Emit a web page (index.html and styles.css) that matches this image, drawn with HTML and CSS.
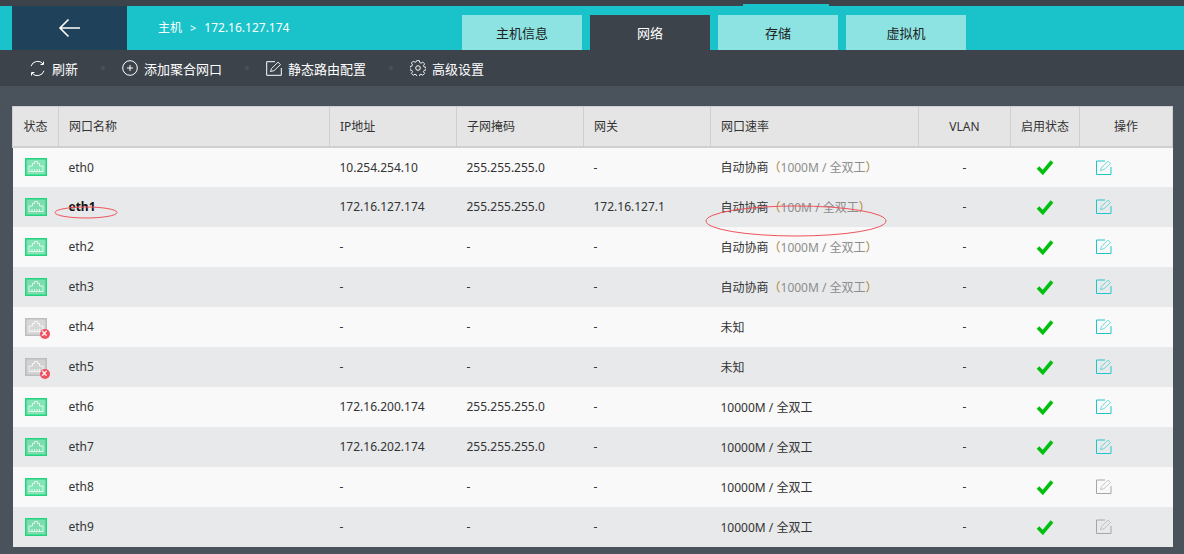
FILE: index.html
```html
<!DOCTYPE html>
<html lang="zh">
<head>
<meta charset="utf-8">
<title>网络</title>
<link rel="stylesheet" href="styles.css">
</head>
<body>
<svg class="defs" width="0" height="0">
  <defs>
    <symbol id="port" viewBox="0 0 22 18">
      <rect x="0.75" y="0.75" width="20.5" height="16.5" fill="currentColor" fill-opacity=".55" stroke="currentColor" stroke-width="1.5"/>
      <path d="M4 13.5V8h3.5V5.5h2V3.5h3v2h2V8H18v5.5z" fill="none" stroke="#fff" stroke-opacity=".75" stroke-width="1"/>
      <path d="M7 11v2M9.5 11v2M12 11v2M14.5 11v2" stroke="#fff" stroke-opacity=".75" stroke-width="1"/>
    </symbol>
    <symbol id="edit" viewBox="0 0 16 15">
      <path d="M9 1H.5v13.5H15V7" fill="none" stroke="currentColor"/>
      <path d="M4.5 10.5l1-3L12 1.2l2.5 2.4L8 9.7z" fill="none" stroke="currentColor" stroke-opacity=".6"/>
    </symbol>
    <symbol id="check" viewBox="0 0 18 16">
      <path d="M2 8.5l4.8 5L16 2.5" fill="none" stroke="currentColor" stroke-width="3.6"/>
    </symbol>
  </defs>
</svg>

<header class="topbar">
  <div class="top-mark"></div>
  <div class="titlebar">
    <a class="back">
      <svg width="24" height="20" viewBox="0 0 24 20"><path d="M22 10H2M10.500 1.500L2 10l8.500 8.500" fill="none" stroke="#fff" stroke-width="1.600"/></svg>
    </a>
    <div class="crumb"><span>主机</span><span class="sep">&gt;</span><span>172.16.127.174</span></div>
    <nav class="tabs">
      <a class="tab">主机信息</a>
      <a class="tab active">网络</a>
      <a class="tab">存储</a>
      <a class="tab">虚拟机</a>
    </nav>
  </div>
  <div class="toolbar">
    <a class="tool">
      <svg width="17" height="17" viewBox="0 0 17 17"><path d="M2 6.200A7 7 0 0 1 14 3.800M15 10.800A7 7 0 0 1 3 13.200" fill="none" stroke="#fff" stroke-width="1"/><path d="M14.500 1.500v3h-3M2.500 15.500v-3h3" fill="none" stroke="#fff" stroke-width="1"/></svg>
      刷新
    </a>
    <i class="dot"></i>
    <a class="tool">
      <svg width="16" height="16" viewBox="0 0 16 16"><circle cx="8" cy="8" r="7.300" fill="none" stroke="#fff"/><path d="M8 5v6M5 8h6" stroke="#fff"/></svg>
      添加聚合网口
    </a>
    <i class="dot"></i>
    <a class="tool">
      <svg width="16" height="15" viewBox="0 0 16 15"><path d="M9 .7H.7v13.600H15.300V7" fill="none" stroke="#fff"/><path d="M4.500 10.500l1-3L12 1.200l2.500 2.400L8 9.700z" fill="none" stroke="#fff" stroke-width=".9"/></svg>
      静态路由配置
    </a>
    <i class="dot"></i>
    <a class="tool">
      <svg width="16" height="16" viewBox="0 0 16 16"><path d="M6.700.8h2.600l.4 2 1.300.6 1.800-1.100 1.800 1.800-1.100 1.800.6 1.300 2 .4v2.600l-2 .4-.6 1.300 1.100 1.800-1.800 1.800-1.800-1.100-1.300.6-.4 2H6.700l-.4-2-1.300-.6-1.800 1.100-1.800-1.800 1.100-1.800-.6-1.300-2-.4V6.700l2-.4.6-1.300-1.100-1.800 1.800-1.800L5 2.500l1.300-.6z" fill="none" stroke="#fff" stroke-width=".9" transform="translate(0 -.2)"/><circle cx="8" cy="8" r="2.300" fill="none" stroke="#fff"/></svg>
      高级设置
    </a>
  </div>
</header>

<main class="content">
  <table class="ports">
    <colgroup>
      <col class="c-state"><col class="c-name"><col class="c-ip"><col class="c-mask"><col class="c-gw"><col class="c-speed"><col class="c-vlan"><col class="c-on"><col class="c-op">
    </colgroup>
    <thead>
      <tr><th class="mid">状态</th><th>网口名称</th><th>IP地址</th><th>子网掩码</th><th>网关</th><th>网口速率</th><th class="mid">VLAN</th><th class="mid">启用状态</th><th class="mid">操作</th></tr>
    </thead>
    <tbody>
      <tr>
        <td class="state"><svg class="port up"><use href="#port"/></svg></td><td>eth0</td><td>10.254.254.10</td><td>255.255.255.0</td><td>-</td>
        <td>自动协商<span class="neg"><b>（</b>1000M / 全双工<b>）</b></span></td><td class="mid">-</td>
        <td class="mid"><svg class="check"><use href="#check"/></svg></td><td class="op"><svg class="edit"><use href="#edit"/></svg></td>
      </tr>
      <tr>
        <td class="state"><svg class="port up"><use href="#port"/></svg></td><td class="bold">eth1</td><td>172.16.127.174</td><td>255.255.255.0</td><td>172.16.127.1</td>
        <td>自动协商<span class="neg"><b>（</b>100M / 全双工<b>）</b></span></td><td class="mid">-</td>
        <td class="mid"><svg class="check"><use href="#check"/></svg></td><td class="op"><svg class="edit"><use href="#edit"/></svg></td>
      </tr>
      <tr>
        <td class="state"><svg class="port up"><use href="#port"/></svg></td><td>eth2</td><td>-</td><td>-</td><td>-</td>
        <td>自动协商<span class="neg"><b>（</b>1000M / 全双工<b>）</b></span></td><td class="mid">-</td>
        <td class="mid"><svg class="check"><use href="#check"/></svg></td><td class="op"><svg class="edit"><use href="#edit"/></svg></td>
      </tr>
      <tr>
        <td class="state"><svg class="port up"><use href="#port"/></svg></td><td>eth3</td><td>-</td><td>-</td><td>-</td>
        <td>自动协商<span class="neg"><b>（</b>1000M / 全双工<b>）</b></span></td><td class="mid">-</td>
        <td class="mid"><svg class="check"><use href="#check"/></svg></td><td class="op"><svg class="edit"><use href="#edit"/></svg></td>
      </tr>
      <tr>
        <td class="state"><span class="down-wrap"><svg class="port down"><use href="#port"/></svg><i class="x">×</i></span></td><td>eth4</td><td>-</td><td>-</td><td>-</td>
        <td>未知</td><td class="mid">-</td>
        <td class="mid"><svg class="check"><use href="#check"/></svg></td><td class="op"><svg class="edit"><use href="#edit"/></svg></td>
      </tr>
      <tr>
        <td class="state"><span class="down-wrap"><svg class="port down"><use href="#port"/></svg><i class="x">×</i></span></td><td>eth5</td><td>-</td><td>-</td><td>-</td>
        <td>未知</td><td class="mid">-</td>
        <td class="mid"><svg class="check"><use href="#check"/></svg></td><td class="op"><svg class="edit"><use href="#edit"/></svg></td>
      </tr>
      <tr>
        <td class="state"><svg class="port up"><use href="#port"/></svg></td><td>eth6</td><td>172.16.200.174</td><td>255.255.255.0</td><td>-</td>
        <td>10000M / 全双工</td><td class="mid">-</td>
        <td class="mid"><svg class="check"><use href="#check"/></svg></td><td class="op"><svg class="edit"><use href="#edit"/></svg></td>
      </tr>
      <tr>
        <td class="state"><svg class="port up"><use href="#port"/></svg></td><td>eth7</td><td>172.16.202.174</td><td>255.255.255.0</td><td>-</td>
        <td>10000M / 全双工</td><td class="mid">-</td>
        <td class="mid"><svg class="check"><use href="#check"/></svg></td><td class="op"><svg class="edit"><use href="#edit"/></svg></td>
      </tr>
      <tr>
        <td class="state"><svg class="port up"><use href="#port"/></svg></td><td>eth8</td><td>-</td><td>-</td><td>-</td>
        <td>10000M / 全双工</td><td class="mid">-</td>
        <td class="mid"><svg class="check"><use href="#check"/></svg></td><td class="op"><svg class="edit off"><use href="#edit"/></svg></td>
      </tr>
      <tr>
        <td class="state"><svg class="port up"><use href="#port"/></svg></td><td>eth9</td><td>-</td><td>-</td><td>-</td>
        <td>10000M / 全双工</td><td class="mid">-</td>
        <td class="mid"><svg class="check"><use href="#check"/></svg></td><td class="op"><svg class="edit off"><use href="#edit"/></svg></td>
      </tr>
    </tbody>
  </table>
</main>

<svg class="note note-name" viewBox="0 0 64 13"><ellipse cx="32" cy="6.500" rx="31" ry="5.500" fill="none" stroke="#f0535a"/></svg>
<svg class="note note-speed" viewBox="0 0 182 32"><ellipse cx="91" cy="16" rx="90" ry="15" fill="none" stroke="#f0535a"/></svg>
</body>
</html>
```
FILE: styles.css
```css
* { box-sizing: border-box; }
html, body { margin: 0; height: 100%; }
body {
  background: #4a525c;
  font-family: "Noto Sans", "Noto Sans CJK SC", sans-serif;
  font-size: 12px;
  color: #222;
  overflow: hidden;
}
.defs { position: absolute; }
.topbar { background: #3d434b; padding-top: 6px; position: relative; }
.top-mark { position: absolute; left: 743px; top: 4px; width: 86px; height: 2px; background: #19c3c9; }
.titlebar { height: 44px; background: #19c3c9; display: flex; padding-left: 12px; }
.back { width: 115px; background: #20415a; display: flex; align-items: center; justify-content: center; }
.crumb { width: 335px; padding-left: 31px; color: #fff; display: flex; align-items: center; gap: 8px; font-size: 12px; padding-bottom: 2px; }
.crumb .sep { font-size: 11px; }
.tabs { display: flex; gap: 8px; align-self: flex-end; }
.tab { width: 120px; height: 35px; background: #8ce3e2; color: #222; display: flex; align-items: center; justify-content: center; font-size: 13px; }
.tab.active { background: #3d434b; color: #fff; }
.toolbar { height: 36px; display: flex; align-items: center; padding-left: 29px; color: #fff; font-size: 13px; }
.tool { display: flex; align-items: center; gap: 6px; }
.dot { width: 4px; height: 4px; border-radius: 50%; background: #4a525c; margin: 0 17px 0 23px; }
.content { padding: 20px 12px 0; }
.ports { width: 1160px; border-collapse: collapse; table-layout: fixed; }
.c-state { width: 46px; }
.c-name { width: 271px; }
.c-ip { width: 127px; }
.c-mask { width: 127px; }
.c-gw { width: 127px; }
.c-speed { width: 208px; }
.c-vlan { width: 92px; }
.c-on { width: 69px; }
.c-op { width: 93px; }
th {
  height: 40px;
  background: #e5e5e5;
  font-weight: 400;
  font-size: 12px;
  text-align: left;
  padding: 0 0 0 10px;
  border: 1px solid #cfcfcf;
  border-width: 1px 1px 2px 1px;
  color: #333;
}
th.mid, td.mid { text-align: center; padding-left: 0; }
td { height: 40px; padding: 0 0 0 10px; color: #333; }
tbody tr:nth-child(odd) { background: #f9f9f9; }
tbody tr:nth-child(even) { background: #e8e9eb; }
td.bold { font-weight: 700; color: #111; }
td.state { padding-left: 12px; }
td.op { padding-left: 16px; }
.neg { color: #8d8d8d; }
.neg b { font-weight: 400; color: #b0812c; }
svg { display: block; }
.port { width: 22px; height: 18px; }
.port.up { color: #22d47e; }
.port.down { color: #bdbdbd; }
.down-wrap { display: block; position: relative; width: 26px; }
.x {
  position: absolute; left: 15px; top: 11px;
  width: 10px; height: 10px; border-radius: 50%;
  background: #f0505e; color: #fff;
  font: 700 10px/10px "Liberation Sans", sans-serif;
  text-align: center;
}
.check { width: 18px; height: 16px; color: #00bf0e; margin: 0 auto; }
.edit { width: 16px; height: 15px; color: #1cc6cc; }
.edit.off { color: #a6a6a6; }
.note { position: absolute; }
.note-name { left: 54px; top: 206px; width: 64px; height: 13px; }
.note-speed { left: 705px; top: 205px; width: 182px; height: 32px; }
```
